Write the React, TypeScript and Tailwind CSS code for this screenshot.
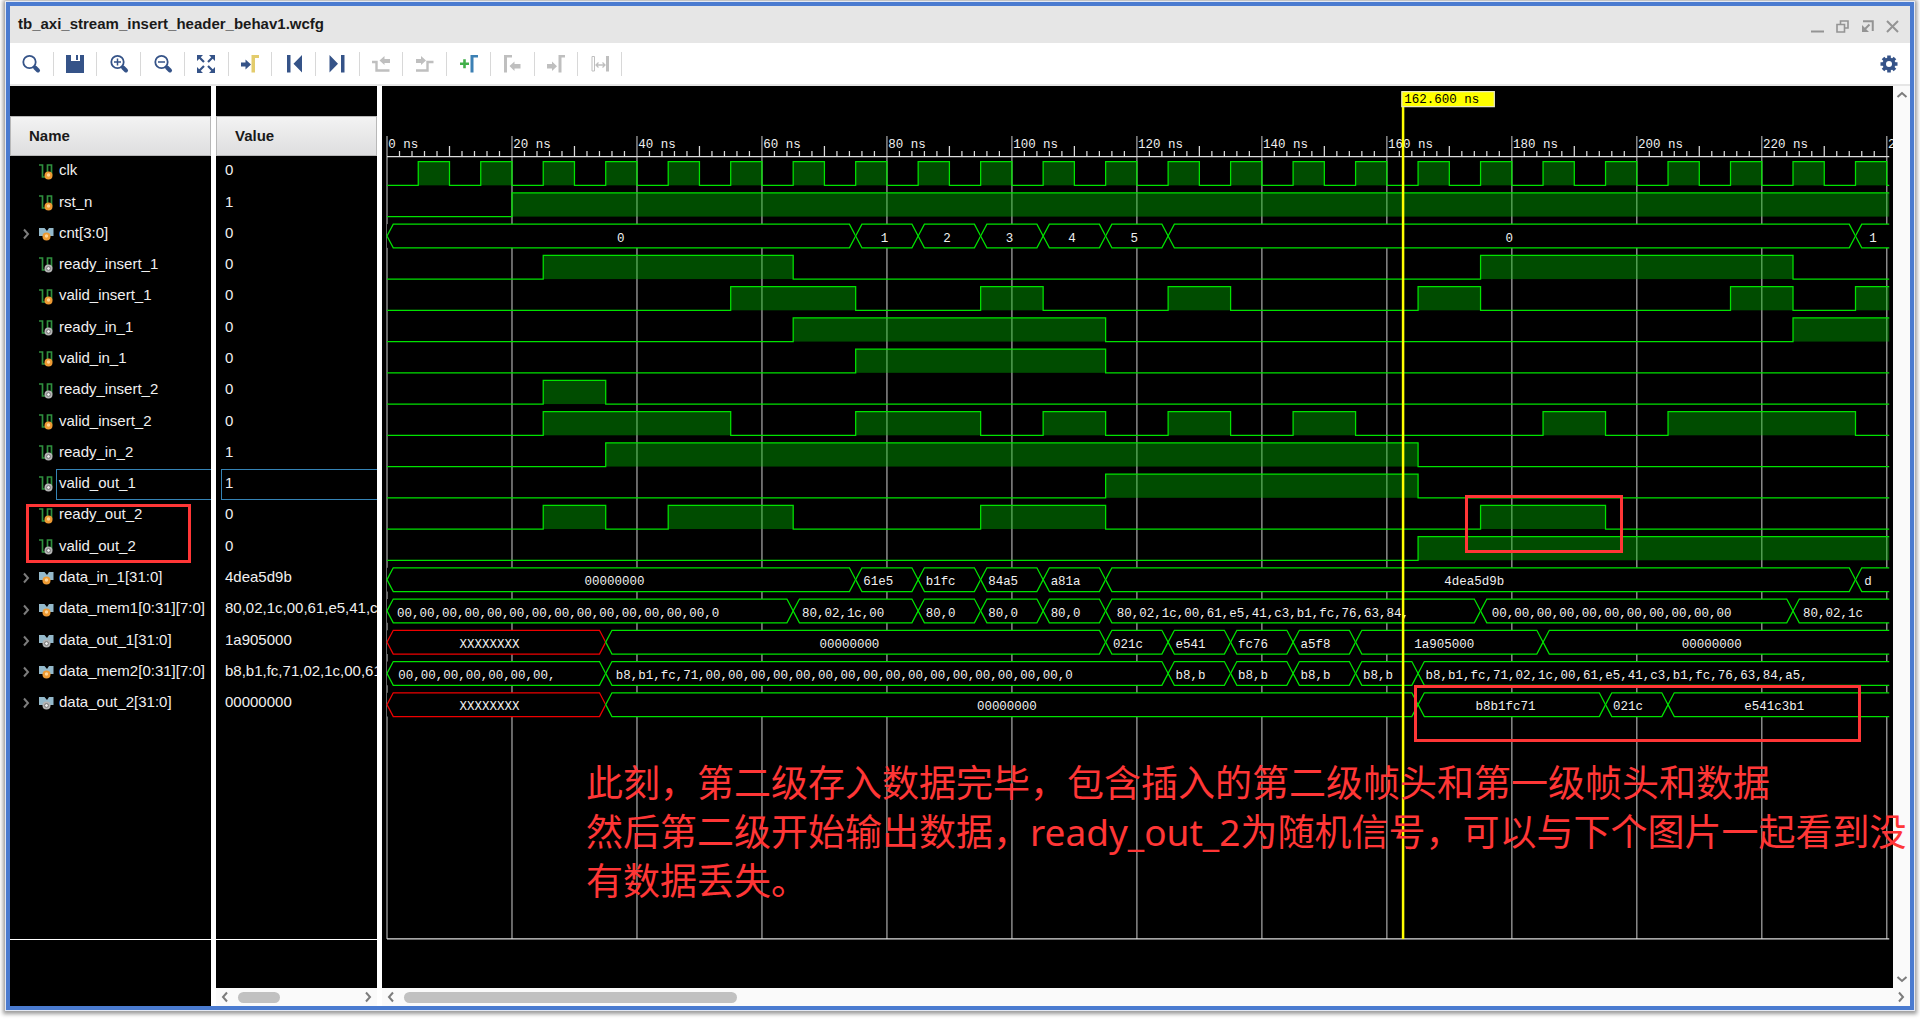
import React from "react";

type Kind = "in" | "out";
type Segment = [end: number, text: string, offset: number, unknown?: boolean];
type Signal = {
  name: string;
  value: string;
  kind: Kind;
  selected?: boolean;
  high?: [number, number][];
  bus?: Segment[];
};

const END = 240.4;
const X8 = "XXXXXXXX";
const Z8 = "00000000";

const clock: [number, number][] = Array.from({ length: 24 }, (_, i) => [i * 10 + 5, i * 10 + 10]);

const signals: Signal[] = [
  { name: "clk", value: "0", kind: "in", high: clock },
  { name: "rst_n", value: "1", kind: "in", high: [[20, END]] },
  {
    name: "cnt[3:0]",
    value: "0",
    kind: "in",
    bus: [
      [75, "0", 184],
      [85, "1", 20],
      [95, "2", 20],
      [105, "3", 20],
      [115, "4", 20],
      [125, "5", 20],
      [235, "0", 270],
      [END, "1", 11],
    ],
  },
  { name: "ready_insert_1", value: "0", kind: "out", high: [[25, 65], [175, 225]] },
  {
    name: "valid_insert_1",
    value: "0",
    kind: "in",
    high: [[55, 75], [95, 105], [125, 135], [165, 175], [215, 225], [235, END]],
  },
  { name: "ready_in_1", value: "0", kind: "out", high: [[65, 115], [225, END]] },
  { name: "valid_in_1", value: "0", kind: "in", high: [[75, 115]] },
  { name: "ready_insert_2", value: "0", kind: "out", high: [[25, 35]] },
  {
    name: "valid_insert_2",
    value: "0",
    kind: "in",
    high: [[25, 55], [75, 95], [105, 115], [125, 135], [145, 155], [185, 195], [205, 235]],
  },
  { name: "ready_in_2", value: "1", kind: "out", high: [[35, 165]] },
  { name: "valid_out_1", value: "1", kind: "out", selected: true, high: [[115, 165]] },
  { name: "ready_out_2", value: "0", kind: "in", high: [[25, 35], [45, 65], [95, 115], [175, 195]] },
  { name: "valid_out_2", value: "0", kind: "out", high: [[165, END]] },
  {
    name: "data_in_1[31:0]",
    value: "4dea5d9b",
    kind: "in",
    bus: [
      [75, Z8, 158],
      [85, "61e5", 6],
      [95, "b1fc", 6],
      [105, "84a5", 6],
      [115, "a81a", 6],
      [235, "4dea5d9b", 271],
      [END, "d", 7],
    ],
  },
  {
    name: "data_mem1[0:31][7:0]",
    value: "80,02,1c,00,61,e5,41,c3",
    kind: "in",
    bus: [
      [65, "00,00,00,00,00,00,00,00,00,00,00,00,00,00,0", 8],
      [85, "80,02,1c,00", 7],
      [95, "80,0", 6],
      [105, "80,0", 6],
      [115, "80,0", 6],
      [175, "80,02,1c,00,61,e5,41,c3,b1,fc,76,63,84,", 9],
      [225, "00,00,00,00,00,00,00,00,00,00,00", 9],
      [END, "80,02,1c", 8],
    ],
  },
  {
    name: "data_out_1[31:0]",
    value: "1a905000",
    kind: "out",
    bus: [
      [35, X8, 58, true],
      [115, Z8, 171],
      [125, "021c", 6],
      [135, "e541", 6],
      [145, "fc76", 6],
      [155, "a5f8", 6],
      [185, "1a905000", 47],
      [END, Z8, 111],
    ],
  },
  {
    name: "data_mem2[0:31][7:0]",
    value: "b8,b1,fc,71,02,1c,00,61",
    kind: "in",
    bus: [
      [35, "00,00,00,00,00,00,00,", 9],
      [125, "b8,b1,fc,71,00,00,00,00,00,00,00,00,00,00,00,00,00,00,00,00,0", 8],
      [135, "b8,b", 6],
      [145, "b8,b", 6],
      [155, "b8,b", 6],
      [165, "b8,b", 6],
      [END, "b8,b1,fc,71,02,1c,00,61,e5,41,c3,b1,fc,76,63,84,a5,", 6],
    ],
  },
  {
    name: "data_out_2[31:0]",
    value: Z8,
    kind: "out",
    bus: [
      [35, X8, 58, true],
      [165, Z8, 297],
      [195, "b8b1fc71", 46],
      [205, "021c", 6],
      [END, "e541c3b1", 61],
    ],
  },
];

/* ---------- toolbar icons, each drawn in a 24 x 24 box ---------- */

const NAVY = "#355388";
const GREY = "#bfbfbf";

const lens = (
  <>
    <circle cx="10.5" cy="10" r="6.2" fill="none" stroke={NAVY} strokeWidth="1.8" />
    <path d="M16 15.500L19 18.500" stroke={NAVY} strokeWidth="4" strokeLinecap="round" />
  </>
);

const tools: { label: string; disabled?: boolean; art: React.ReactNode }[] = [
  { label: "Search", art: lens },
  {
    label: "Save",
    art: <path d="M3 3H8V9H17V3H21V21H3ZM13 3H15V8H13Z" fill={NAVY} />,
  },
  {
    label: "Zoom in",
    art: (
      <>
        {lens}
        <path d="M7 10H14M10.5 6.5V13.5" stroke={NAVY} strokeWidth="1.5" />
      </>
    ),
  },
  {
    label: "Zoom out",
    art: (
      <>
        {lens}
        <path d="M7 10H14" stroke={NAVY} strokeWidth="1.5" />
      </>
    ),
  },
  {
    label: "Zoom fit",
    art: (
      <>
        <path d="M5 5L10 10M19 5L14 10M5 19L10 14M19 19L14 14" stroke={NAVY} strokeWidth="2.2" />
        <path d="M3 3H9L3 9ZM21 3V9L15 3ZM3 21V15L9 21ZM21 21H15L21 15Z" fill={NAVY} />
      </>
    ),
  },
  {
    label: "Go to cursor",
    art: (
      <>
        <path d="M3 10.500H7.500V7.500L13 12.500L7.500 17.500V14.500H3Z" fill={NAVY} />
        <path d="M13.500 3H21V6H17V20.500H13.500Z" fill="#e3cc6c" />
      </>
    ),
  },
  {
    label: "Go to time 0",
    art: <path d="M5 3H8.500V20.500H5ZM20 3V20.500L11.500 11.750Z" fill={NAVY} />,
  },
  {
    label: "Go to last time",
    art: <path d="M4.500 3V20.500L13 11.750ZM16 3H19.500V20.500H16Z" fill={NAVY} />,
  },
  {
    label: "Previous transition",
    disabled: true,
    art: (
      <>
        <path d="M3 10H7.500V18.500H20.500" fill="none" stroke={GREY} strokeWidth="2.4" />
        <path d="M10.500 8.500L15.500 4V7H21V11H15.500V13Z" fill={GREY} />
      </>
    ),
  },
  {
    label: "Next transition",
    disabled: true,
    art: (
      <>
        <path d="M3 18.500H14.500V10H20.500" fill="none" stroke={GREY} strokeWidth="2.4" />
        <path d="M13 8.500L8 4V7H3V11H8V13Z" fill={GREY} />
      </>
    ),
  },
  {
    label: "Add marker",
    art: (
      <>
        <path d="M3 11.750H12M7.500 7.250V16.250" stroke="#42b04a" strokeWidth="2.6" />
        <path d="M13.500 3H21V5.500H16.500V20.500H13.500Z" fill="#3c80b4" />
      </>
    ),
  },
  {
    label: "Previous marker",
    disabled: true,
    art: (
      <>
        <path d="M4 3H12V5.500H7V20.500H4Z" fill={GREY} />
        <path d="M9.500 14L14.500 9.500V12H20.500V16.500H14.500V19Z" fill={GREY} />
      </>
    ),
  },
  {
    label: "Next marker",
    disabled: true,
    art: (
      <>
        <path d="M3 12H8V9.500L13 14.250L8 19V16.500H3Z" fill={GREY} />
        <path d="M14.500 3H21V5.500H17.500V20.500H14.500Z" fill={GREY} />
      </>
    ),
  },
  {
    label: "Swap cursors",
    disabled: true,
    art: (
      <>
        <path d="M4 4.500H6.500V19H4Z" fill="none" stroke={GREY} strokeWidth="1" />
        <path d="M8 13H17M10.500 10.500L8 13L10.500 15.500M14.500 10.500L17 13L14.500 15.500" fill="none" stroke={GREY} strokeWidth="1.300" />
        <path d="M18 4H21V19.500H18Z" fill={GREY} />
      </>
    ),
  },
];

const windowButtons: { label: string; art: React.ReactNode }[] = [
  { label: "Minimize", art: <path d="M0 11.500H13" /> },
  { label: "Restore", art: <path d="M4.500 4V1H12V8H9M1 4.500H8.500V12H1Z" strokeWidth="1.600" /> },
  {
    label: "Float",
    art: (
      <>
        <path d="M2 1.250H11.750V11" />
        <path d="M8.500 4.500L4 9" />
        <path d="M1 5V12H8Z" fill="#949494" stroke="none" />
      </>
    ),
  },
  { label: "Close", art: <path d="M1 1L12 12M12 1L1 12" /> },
];

function Chevron({ dir }: { dir: "left" | "right" | "up" | "down" }) {
  const d = {
    left: "M8 1.500L4 6L8 10.500",
    right: "M4 1.500L8 6L4 10.500",
    up: "M1.500 8L6 4L10.500 8",
    down: "M1.500 4L6 8L10.500 4",
  }[dir];
  return (
    <svg viewBox="0 0 12 12" className="size-3" fill="none" stroke="#7c7c7c" strokeWidth="2">
      <path d={d} />
    </svg>
  );
}

function KindDot({ kind, cx, cy }: { kind: Kind; cx: number; cy: number }) {
  return kind === "in" ? (
    <>
      <circle cx={cx} cy={cy} r="4" fill="#ee9a33" />
      <circle cx={cx} cy={cy - 0.5} r="1.700" fill="#ffd596" />
    </>
  ) : (
    <>
      <circle cx={cx} cy={cy} r="4" fill="#b4b4b4" />
      <circle cx={cx} cy={cy} r="1.900" fill="#f0f0f0" stroke="#707070" strokeWidth="1" />
    </>
  );
}

function SignalIcon({ signal }: { signal: Signal }) {
  return (
    <svg viewBox="0 0 16 16" className="size-4 shrink-0" aria-hidden="true">
      {signal.bus ? (
        <>
          <path d="M1 2H6.500L9 5L11 2H15.500V10H11L8.500 8L6 10H1Z" fill="#94b9cb" />
          <KindDot kind={signal.kind} cx={8.5} cy={10.5} />
        </>
      ) : (
        <>
          <path d="M1 1H4.500V13H9.500V1H13.500V11" fill="none" stroke="#2f8f3e" strokeWidth="1.700" />
          <KindDot kind={signal.kind} cx={10.5} cy={11.5} />
        </>
      )}
    </svg>
  );
}

/* ---------- waveform drawing: 5 units per ns, 25 units per row ---------- */

const X0 = 4;
const tx = (ns: number) => X0 + ns * 5;
const GREEN = "#00e200";
const RED = "#ee0000";

function BitWave({ high, top }: { high: [number, number][]; top: number }) {
  const bottom = top + 19;
  let d = `M${X0} ${bottom}`;
  high.forEach(([a, b]) => {
    d += `H${tx(a)}V${top}H${tx(b)}`;
    if (b < END) d += `V${bottom}`;
  });
  if (high[high.length - 1][1] < END) d += `H${tx(END)}`;
  return (
    <g>
      {high.map(([a, b]) => (
        <rect key={a} x={tx(a)} y={top} width={tx(b) - tx(a)} height={19} fill="#00be00" fillOpacity="0.4" />
      ))}
      <path d={d} fill="none" stroke={GREEN} />
    </g>
  );
}

function BusWave({ bus, top }: { bus: Segment[]; top: number }) {
  const mid = top + 9.5;
  const bottom = top + 19;
  return (
    <g>
      {bus.map(([end, text, offset, unknown], i) => {
        const a = tx(i === 0 ? 0 : bus[i - 1][0]);
        const b = tx(end);
        const last = end === END;
        const d = last
          ? `M${b} ${top}H${a + 5}L${a} ${mid}L${a + 5} ${bottom}H${b}`
          : `M${a} ${mid}L${a + 5} ${top}H${b - 5}L${b} ${mid}L${b - 5} ${bottom}H${a + 5}Z`;
        return (
          <g key={end}>
            <rect x={a} y={top} width={b - a} height={19} fill="#000" />
            <path d={d} fill="none" stroke={unknown ? RED : GREEN} />
            <text x={a + offset} y={top + 14} fill="#f0f0f0">
              {text}
            </text>
          </g>
        );
      })}
    </g>
  );
}

function Waveform() {
  return (
    <svg
      viewBox="0 0 1209 722"
      className="block w-full font-['Liberation_Mono',monospace] text-[10px]"
      role="img"
      aria-label="Waveform"
    >
      <g stroke="#8a8a8a" strokeWidth="1.200">
        {Array.from({ length: 13 }, (_, i) => (
          <path key={i} d={`M${tx(i * 20)} 40V682.500`} />
        ))}
      </g>
      <g stroke="#dcdcdc">
        {Array.from({ length: 120 }, (_, i) => i)
          .filter((i) => i % 10 !== 0)
          .map((i) => (
            <path key={i} d={`M${tx(i * 2)} ${i % 5 === 0 ? 48 : 52}V56`} />
          ))}
        <path d={`M${X0} 56.500H${tx(END)}`} />
        <path d={`M${X0} 682.500H${tx(END)}`} />
      </g>
      {Array.from({ length: 13 }, (_, i) => (
        <text key={i} x={tx(i * 20) + 1} y={50} fill="#f0f0f0">
          {`${i * 20} ns`}
        </text>
      ))}
      {signals.map((s, i) =>
        s.bus ? (
          <BusWave key={s.name} bus={s.bus} top={60.5 + i * 25} />
        ) : (
          <BitWave key={s.name} high={s.high!} top={60.5 + i * 25} />
        ),
      )}
      <path d={`M${tx(162.6)} 5V682.500`} stroke="#ffff00" strokeWidth="2" />
      <rect x="816" y="4.500" width="74" height="12" fill="#ffff00" stroke="#e8e8c0" />
      <text x="818" y="14" fill="#000">
        162.600 ns
      </text>
    </svg>
  );
}

function ColumnHeader({ children }: { children: string }) {
  return (
    <div className="flex h-10 items-center border border-[#b8b8b8] bg-linear-to-b from-[#f3f3f3] to-[#dededf] pl-[18px] text-[15px] font-bold text-[#1a1a1a]">
      {children}
    </div>
  );
}

function HorizontalScrollbar({ label, thumb }: { label: string; thumb: string }) {
  return (
    <div className="flex h-[18px] shrink-0 items-center bg-[#fafafa] px-[3px]" aria-label={label}>
      <button type="button" aria-label="Scroll left" className="flex w-[19px] shrink-0 justify-start">
        <Chevron dir="left" />
      </button>
      <div className="min-w-0 flex-1">
        <div className={thumb} />
      </div>
      <button type="button" aria-label="Scroll right" className="flex shrink-0">
        <Chevron dir="right" />
      </button>
    </div>
  );
}

export default function App() {
  return (
    <div className="h-screen overflow-hidden bg-white pt-px pr-[5px] pb-[9px] pl-[5px] font-['Liberation_Sans',Arial,sans-serif]">
      <div className="h-full border border-[#e4e9f4] shadow-[0_1px_4px_2px_#9a9a9a]">
        <div className="flex h-full flex-col border-4 border-[#4a7bd0] bg-white">
          <header className="flex h-[37px] shrink-0 items-center justify-between bg-[#e6e6e6] pr-[11px] pl-2">
            <h1 className="text-[15px] font-bold text-[#1a1a1a]">tb_axi_stream_insert_header_behav1.wcfg</h1>
            <div className="flex gap-3 pt-1">
              {windowButtons.map((b) => (
                <button key={b.label} type="button" aria-label={b.label}>
                  <svg viewBox="0 0 13 13" className="size-[13px]" fill="none" stroke="#949494" strokeWidth="2">
                    {b.art}
                  </svg>
                </button>
              ))}
            </div>
          </header>

          <div className="flex h-[43px] shrink-0 items-center justify-between border-b-2 border-[#e6e6e6] pr-[11px]">
            <div className="flex w-[612px]">
              {tools.map((t) => (
                <button
                  key={t.label}
                  type="button"
                  aria-label={t.label}
                  disabled={t.disabled}
                  className="flex h-6 flex-1 items-center justify-center border-r border-[#d8d8d8]"
                >
                  <svg viewBox="0 0 24 24" className="size-6">
                    {t.art}
                  </svg>
                </button>
              ))}
            </div>
            <button type="button" aria-label="Settings">
              <svg viewBox="0 0 20 20" className="size-5">
                <g stroke={NAVY} strokeWidth="3.600">
                  <path d="M10 1.500V18.500M1.500 10H18.500M4 4L16 16M16 4L4 16" />
                </g>
                <circle cx="10" cy="10" r="6.500" fill={NAVY} />
                <circle cx="10" cy="10" r="3" fill="#fff" />
              </svg>
            </button>
          </div>

          <main className="relative flex min-h-0 flex-1">
            <section className="flex w-[201px] shrink-0 flex-col bg-black pt-[30px] text-[15px] text-[#f0f0f0]">
              <ColumnHeader>Name</ColumnHeader>
              <ul className="grid h-[563px] grid-rows-[repeat(18,minmax(0,1fr))]">
                {signals.map((s) => (
                  <li key={s.name} className="flex items-center pl-[10px]">
                    <span className="flex w-[18px] shrink-0">
                      {s.bus && (
                        <button type="button" aria-label={`Expand ${s.name}`}>
                          <Chevron dir="right" />
                        </button>
                      )}
                    </span>
                    <SignalIcon signal={s} />
                    <span
                      className={
                        s.selected
                          ? "ml-0.5 flex h-full flex-1 items-center border-y border-l border-[#3583b5] pb-0.5 pl-0.5"
                          : "flex-1 pb-0.5 pl-[5px] whitespace-nowrap"
                      }
                    >
                      {s.name}
                    </span>
                  </li>
                ))}
              </ul>
              <div className="flex-1" />
              <div className="h-[67px] shrink-0 border-t border-white" />
            </section>

            <div className="w-[5px] shrink-0 bg-white" />

            <section className="flex w-[161px] shrink-0 flex-col bg-black pt-[30px] text-[15px] text-[#f0f0f0]">
              <ColumnHeader>Value</ColumnHeader>
              <ul className="grid h-[563px] grid-rows-[repeat(18,minmax(0,1fr))]">
                {signals.map((s) => (
                  <li
                    key={s.name}
                    className={
                      s.selected
                        ? "ml-[5px] flex items-center border-y border-l border-[#3583b5] pb-0.5 pl-[3px]"
                        : "flex items-center overflow-hidden pb-0.5 pl-[9px] whitespace-nowrap"
                    }
                  >
                    {s.value}
                  </li>
                ))}
              </ul>
              <div className="flex-1" />
              <div className="h-[49px] shrink-0 border-t border-white" />
              <HorizontalScrollbar label="Value scrollbar" thumb="h-[11px] w-[42px] rounded-full bg-[#c1c1c1]" />
            </section>

            <div className="w-[5px] shrink-0 bg-white" />

            <section className="flex min-w-0 flex-1 flex-col">
              <div className="flex min-h-0 flex-1">
                <div className="min-w-0 flex-1 overflow-hidden bg-black">
                  <Waveform />
                </div>
                <div className="flex w-[17px] shrink-0 flex-col items-center justify-between bg-[#fafafa] py-[3px]">
                  <button type="button" aria-label="Scroll up">
                    <Chevron dir="up" />
                  </button>
                  <button type="button" aria-label="Scroll down">
                    <Chevron dir="down" />
                  </button>
                </div>
              </div>
              <HorizontalScrollbar label="Time scrollbar" thumb="h-[11px] w-[333px] rounded-full bg-[#c1c1c1]" />
            </section>

            <div className="absolute top-[418px] left-4 h-[59px] w-[165px] border-3 border-[#ff3636]" />
            <div className="absolute top-[409px] left-[1455px] h-[58px] w-[158px] border-3 border-[#ff3636]" />
            <div className="absolute top-[599px] left-[1404px] h-[57px] w-[447px] border-3 border-[#ff3636]" />
            <p
              lang="zh-CN"
              className="absolute top-[672px] left-[576px] font-['Noto_Sans','Noto_Sans_CJK_SC',sans-serif] text-[37px] leading-[49px] whitespace-nowrap text-[#ff3636]"
            >
              此刻，第二级存入数据完毕，包含插入的第二级帧头和第一级帧头和数据
              <br />
              然后第二级开始输出数据，ready_out_2为随机信号，可以与下个图片一起看到没
              <br />
              有数据丢失。
            </p>
          </main>
        </div>
      </div>
    </div>
  );
}
